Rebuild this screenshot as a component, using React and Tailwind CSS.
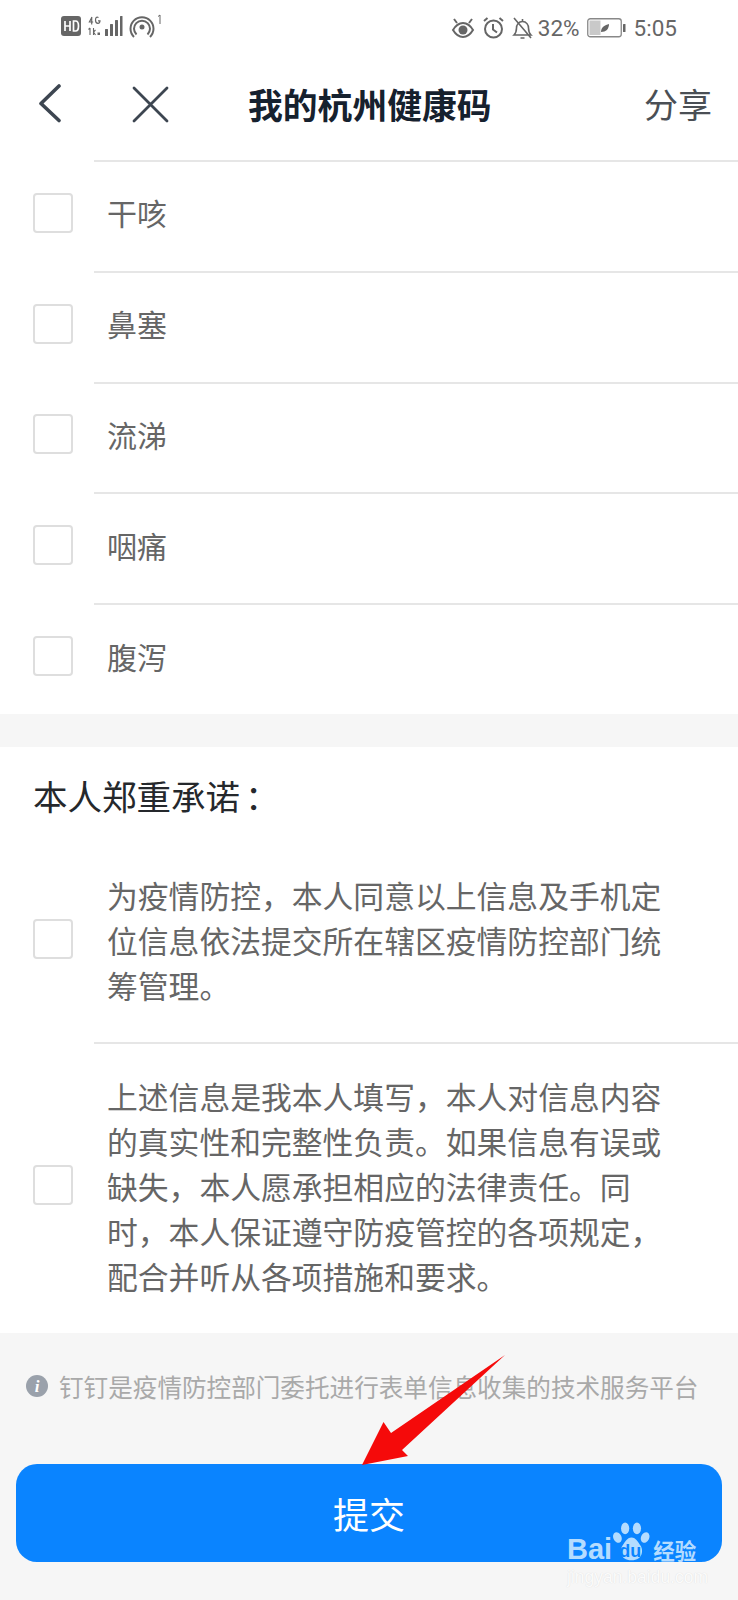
const FONT = "font-['Noto_Sans_CJK_SC','Noto_Sans',sans-serif]";

function Checkbox() {
  return <div className="ml-[33px] h-[40px] w-[40px] rounded-[4px] border-2 border-[#dedede] bg-white" />;
}

function SimpleRow({ label }) {
  return (
    <div className="flex h-[110.8px] items-center">
      <div className="flex h-full w-[94px] shrink-0 items-center pb-[5px]">
        <Checkbox />
      </div>
      <div className="flex h-full flex-1 items-center border-t-2 border-[#e6e6e6] pb-[7px] pl-[13px] text-[30px] text-[#666666]">
        {label}
      </div>
    </div>
  );
}

function TextRow({ lines, border }) {
  return (
    <div className="flex items-center">
      <div className={`flex w-[94px] shrink-0 items-center self-stretch ${border ? "pb-[5px]" : ""}`}>
        <Checkbox />
      </div>
      <div className={`flex-1 pl-[13px] ${border ? "border-t-2 border-[#e6e6e6] pt-[29px]" : "pt-[35px]"} pb-[35px]`}>
        {lines.map((l) => (
          <div key={l} className="h-[45px] whitespace-nowrap text-[30.8px] leading-[45px] text-[#666666]">
            {l}
          </div>
        ))}
      </div>
    </div>
  );
}

function StatusBar() {
  return (
    <div className="flex h-[56px] items-center justify-between pl-[61px] pr-[61px] text-[#666666]">
      <svg width="104" height="30" viewBox="0 0 104 30">
        <rect x="0" y="3" width="20" height="20" rx="3" fill="#666" />
        <path d="M4 8v10M4 13h5M9 8v10M12.500 8v10h2c2 0 3-2 3-5s-1-5-3-5z" stroke="#fff" strokeWidth="1.700" fill="none" />
        <path d="M31 4l-2.600 5h3.800M30.700 4v7.500M37.500 4.500c-2-1-3 0-3 2.500s1 3.300 2.500 3.300 2-1 2-2.500h-2" stroke="#666" strokeWidth="1.200" fill="none" />
        <path d="M29 15v7M27.500 16.500l1.500-1.500M32.500 15v7M32.500 19l2-2M32.500 19l2 3" stroke="#666" strokeWidth="1.100" fill="none" />
        <rect x="36.500" y="19.500" width="2.500" height="2.500" fill="#666" />
        <rect x="44" y="16" width="3" height="7" rx="0.500" fill="#666" />
        <rect x="49" y="11" width="3" height="12" rx="0.500" fill="#666" />
        <rect x="54" y="7" width="3" height="16" rx="0.500" fill="#666" />
        <rect x="59" y="3" width="2.500" height="20" rx="0.500" fill="#666" />
        <circle cx="81" cy="14" r="2.500" fill="#666" />
        <path d="M75.500 21.500a8 8 0 1 1 11 0" stroke="#666" strokeWidth="2" fill="none" />
        <path d="M73 24a11.500 11.500 0 1 1 16 0" stroke="#666" strokeWidth="2" fill="none" />
        <path d="M97 3.500l2-1.500v9" stroke="#666" strokeWidth="1" fill="none" />
      </svg>
      <div className="flex items-center">
        <svg width="24" height="24" viewBox="0 0 24 24" className="mr-[7px]">
          <path d="M2 14c3-5 6.500-7 10-7s7 2 10 7c-3 5-6.500 7-10 7s-7-2-10-7z" stroke="#666" strokeWidth="2" fill="none" />
          <circle cx="12" cy="14" r="4.500" fill="#666" />
          <path d="M3 3l3 4M21 3l-3 4" stroke="#666" strokeWidth="2" fill="none" />
        </svg>
        <svg width="23" height="24" viewBox="0 0 23 24" className="mr-[7px]">
          <circle cx="11.500" cy="13" r="8.500" stroke="#666" strokeWidth="2" fill="none" />
          <path d="M11 8v5.500l4 3M2 5l3.500-3M21 5l-3.500-3" stroke="#666" strokeWidth="2" fill="none" />
        </svg>
        <svg width="21" height="24" viewBox="0 0 21 24" className="mr-[5px]">
          <path d="M2 19c2-2 2.500-4 2.500-7s2-6.500 6-6.500 6 3.500 6 6.500 .5 5 2.500 7zM8.500 22h4M10.500 3v2.500M2 2l17 20" stroke="#666" strokeWidth="1.600" fill="none" />
        </svg>
        <span className="mr-[7px] font-['Roboto',sans-serif] text-[22.500px] leading-none text-[#666666]">32%</span>
        <svg width="40" height="20" viewBox="0 0 40 20" className="mr-[7px]">
          <rect x="0.750" y="0.750" width="33.500" height="18" rx="2.500" stroke="#888" strokeWidth="1.300" fill="none" />
          <rect x="2.500" y="2.500" width="11" height="14.500" fill="#c9c9c9" />
          <path d="M14 14c0-5 4-7 8-8 0 5-3 8-8 8z" fill="#666" />
          <rect x="36" y="6" width="2.500" height="8" rx="0.500" fill="#666" />
        </svg>
        <span className="font-['Roboto',sans-serif] text-[22.500px] leading-none text-[#666666]">5:05</span>
      </div>
    </div>
  );
}

function NavBar() {
  return (
    <div className="flex h-[104px] items-center pb-[8px]">
      <svg width="24" height="40" viewBox="0 0 24 40" className="ml-[37px]">
        <path d="M22 2L4 19.500 22 36.500" stroke="#3d4651" strokeWidth="3.600" strokeLinecap="round" strokeLinejoin="round" fill="none" />
      </svg>
      <svg width="38" height="38" viewBox="0 0 38 38" className="ml-[70px]">
        <path d="M3 3l33 33M36 3L3 36" stroke="#3d4651" strokeWidth="2.800" strokeLinecap="round" fill="none" />
      </svg>
      <div className="ml-[79px] whitespace-nowrap text-[34.800px] font-bold leading-none text-[#16212e]">我的杭州健康码</div>
      <div className="ml-auto mr-[26px] text-[34px] leading-none text-[#4a4f55]">分享</div>
    </div>
  );
}

function Watermark() {
  return (
    <div className="pointer-events-none absolute left-[567px] top-[1522px] w-[136px]">
      <div className="flex items-end">
        <span className="font-['Liberation_Sans',sans-serif] text-[29px] font-bold leading-[26px] text-[#b5dcff]">Bai</span>
        <div className="relative h-[40px] w-[39px]">
          <svg width="39" height="40" viewBox="0 0 40 44" className="absolute inset-0">
            <ellipse cx="13" cy="7" rx="4.500" ry="6.500" fill="#b5dcff" />
            <ellipse cx="26" cy="7" rx="4.500" ry="6.500" fill="#b5dcff" />
            <ellipse cx="4.500" cy="17" rx="4.500" ry="6" fill="#b5dcff" transform="rotate(-25 4.500 17)" />
            <ellipse cx="35" cy="17" rx="4.500" ry="6" fill="#b5dcff" transform="rotate(25 35 17)" />
            <path d="M20 17c5 0 7 5 10 9 3 4 3 16-10 16S7 30 10 26c3-4 5-9 10-9z" fill="#b5dcff" />
          </svg>
          <span className="absolute left-[7px] top-[20px] font-['Liberation_Sans',sans-serif] text-[18px] font-bold leading-[18px] text-[#0a84ff]">du</span>
        </div>
        <span className="ml-[2px] text-[21.500px] font-bold leading-[25px] text-[#b5dcff]">经验</span>
      </div>
      <div className="mt-[5px] whitespace-nowrap font-['Liberation_Sans',sans-serif] text-[17.500px] leading-[20px] text-[#fbfbfb] [text-shadow:0_0_1px_#d8d8d8]">jingyan.baidu.com</div>
    </div>
  );
}

function Arrow() {
  return (
    <svg width="738" height="1600" viewBox="0 0 738 1600" className="pointer-events-none absolute left-0 top-0">
      <polygon points="505,1355 391,1433 383.500,1422 362,1465 408,1456 402,1450" fill="#f50a0a" />
    </svg>
  );
}

export default function App() {
  const symptoms = ["干咳", "鼻塞", "流涕", "咽痛", "腹泻"];
  return (
    <div className={`relative flex h-[1600px] w-[738px] flex-col overflow-hidden bg-[#f6f6f6] ${FONT}`}>
      <div className="bg-white">
        <StatusBar />
        <NavBar />
        {symptoms.map((s) => (
          <SimpleRow key={s} label={s} />
        ))}
      </div>
      <div className="mt-[33px] bg-white">
        <div className="flex h-[90px] items-start pl-[33px] pt-[28px] text-[34.500px] leading-[40px] text-[#25282c]">
          本人郑重承诺<span className="ml-[5px]">：</span>
        </div>
        <TextRow
          lines={["为疫情防控，本人同意以上信息及手机定", "位信息依法提交所在辖区疫情防控部门统", "筹管理。"]}
        />
        <TextRow
          border
          lines={[
            "上述信息是我本人填写，本人对信息内容",
            "的真实性和完整性负责。如果信息有误或",
            "缺失，本人愿承担相应的法律责任。同",
            "时，本人保证遵守防疫管控的各项规定，",
            "配合并听从各项措施和要求。",
          ]}
        />
      </div>
      <div className="flex h-[131px] items-center pb-[24px] pl-[26px]">
        <div className="flex h-[22px] w-[22px] items-center justify-center rounded-full bg-[#9aa1ab] font-['Liberation_Serif',serif] text-[17px] font-bold italic leading-none text-white">i</div>
        <div className="ml-[11px] whitespace-nowrap text-[24.600px] leading-none text-[#a9a9a9]">钉钉是疫情防控部门委托进行表单信息收集的技术服务平台</div>
      </div>
      <div className="mx-[16px] flex h-[98px] items-center justify-center rounded-[21px] bg-[#0a84ff] text-[36px] text-white">提交</div>
      <Arrow />
      <Watermark />
    </div>
  );
}
